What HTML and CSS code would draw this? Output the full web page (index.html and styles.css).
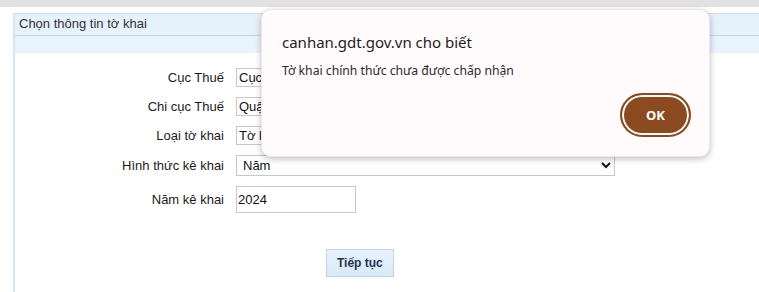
FILE: index.html
```html
<!DOCTYPE html>
<html lang="vi">
<head>
    <meta charset="UTF-8">
    <meta name="viewport" content="width=device-width, initial-scale=1.0">
    <title>Chọn thông tin tờ khai</title>
    <link rel="stylesheet" href="styles.css">
</head>
<body>
    <div class="topbar"></div>
    <div class="panel">
        <div class="panel-title">Chọn thông tin tờ khai</div>
        <div class="panel-sub"></div>
        <form class="form">
            <label class="label">Cục Thuế</label>
            <select class="field"><option>Cục Thuế Thành phố Hà Nội</option></select>
            <label class="label">Chi cục Thuế</label>
            <select class="field"><option>Quận Cầu Giấy</option></select>
            <label class="label">Loại tờ khai</label>
            <select class="field"><option>Tờ khai quyết toán thuế TNCN</option></select>
            <label class="label">Hình thức kê khai</label>
            <select class="field field-big"><option>Năm</option></select>
            <label class="label">Năm kê khai</label>
            <input class="year" type="text" value="2024">
        </form>
        <div class="actions">
            <button type="button" class="btn">Tiếp tục</button>
        </div>
    </div>

    <div class="dialog">
        <div class="dialog-title">canhan.gdt.gov.vn cho biết</div>
        <div class="dialog-msg">Tờ khai chính thức chưa được chấp nhận</div>
        <div class="dialog-actions">
            <button type="button" class="ok">OK</button>
        </div>
    </div>
</body>
</html>
```

FILE: styles.css
```css
body {
    margin: 0;
    padding: 0;
    background: #fff;
    font-family: "Liberation Sans", Arial, sans-serif;
    font-size: 13px;
    color: #222;
    overflow: hidden;
}
.topbar {
    height: 7px;
    background: #e2e2e2;
}
.panel {
    margin: 6px 0 0 13px;
    border-top: 1px solid #c9dff0;
    border-left: 2px solid #d3e6f4;
    height: 278px;
}
.panel-title {
    height: 21px;
    line-height: 20px;
    padding-left: 4px;
    background: #e5f1fb;
    border-bottom: 1px solid #bcd6ec;
    color: #333;
}
.panel-sub {
    height: 17px;
    background: #e8f3fc;
}
.form {
    display: grid;
    grid-template-columns: 209px auto;
    column-gap: 12px;
    row-gap: 10px;
    align-items: center;
    justify-items: start;
    padding-top: 15px;
}
.label {
    justify-self: end;
    color: #1a1a1a;
}
.field {
    width: 379px;
    height: 19px;
    padding: 0 2px;
    border: 1px solid #c8c8c8;
    background: #fff;
    font-family: "Liberation Sans", Arial, sans-serif;
    font-size: 13px;
    color: #111;
    appearance: none;
}
.field-big {
    height: 21px;
    appearance: auto;
}
.year {
    width: 120px;
    height: 27px;
    box-sizing: border-box;
    padding: 0 1px;
    border: 1px solid #c8c8c8;
    font-family: "Liberation Sans", Arial, sans-serif;
    font-size: 13px;
    color: #111;
}
.actions {
    padding: 36px 0 0 311px;
}
.btn {
    height: 28px;
    padding: 0 10px;
    border: 1px solid #bcd5e8;
    background: linear-gradient(#e8f3fc, #d7e9f7);
    font-family: "Liberation Sans", Arial, sans-serif;
    font-size: 12px;
    font-weight: bold;
    color: #1f3550;
}
.dialog {
    position: absolute;
    left: 261px;
    top: 9px;
    width: 449px;
    height: 148px;
    box-sizing: border-box;
    padding: 22px 18px 0 20px;
    background: #fffafb;
    border: 1px solid #f0e4e4;
    border-radius: 10px;
    box-shadow: 0 2px 6px rgba(0, 0, 0, 0.25);
    font-family: "Noto Sans", "Open Sans", sans-serif;
}
.dialog-title {
    font-size: 15px;
    color: #1e1e1e;
    line-height: 21px;
}
.dialog-msg {
    margin-top: 9px;
    font-size: 12.2px;
    color: #2a2a2a;
}
.dialog-actions {
    display: flex;
    justify-content: flex-end;
    margin-top: 14px;
}
.ok {
    width: 71px;
    height: 44px;
    border: 2px solid #8b4a1f;
    border-radius: 22px;
    background: #8b4a1f;
    box-shadow: inset 0 0 0 2px #fff;
    color: #fff;
    font-family: "Noto Sans", "Open Sans", sans-serif;
    font-size: 13px;
    font-weight: bold;
}
```
